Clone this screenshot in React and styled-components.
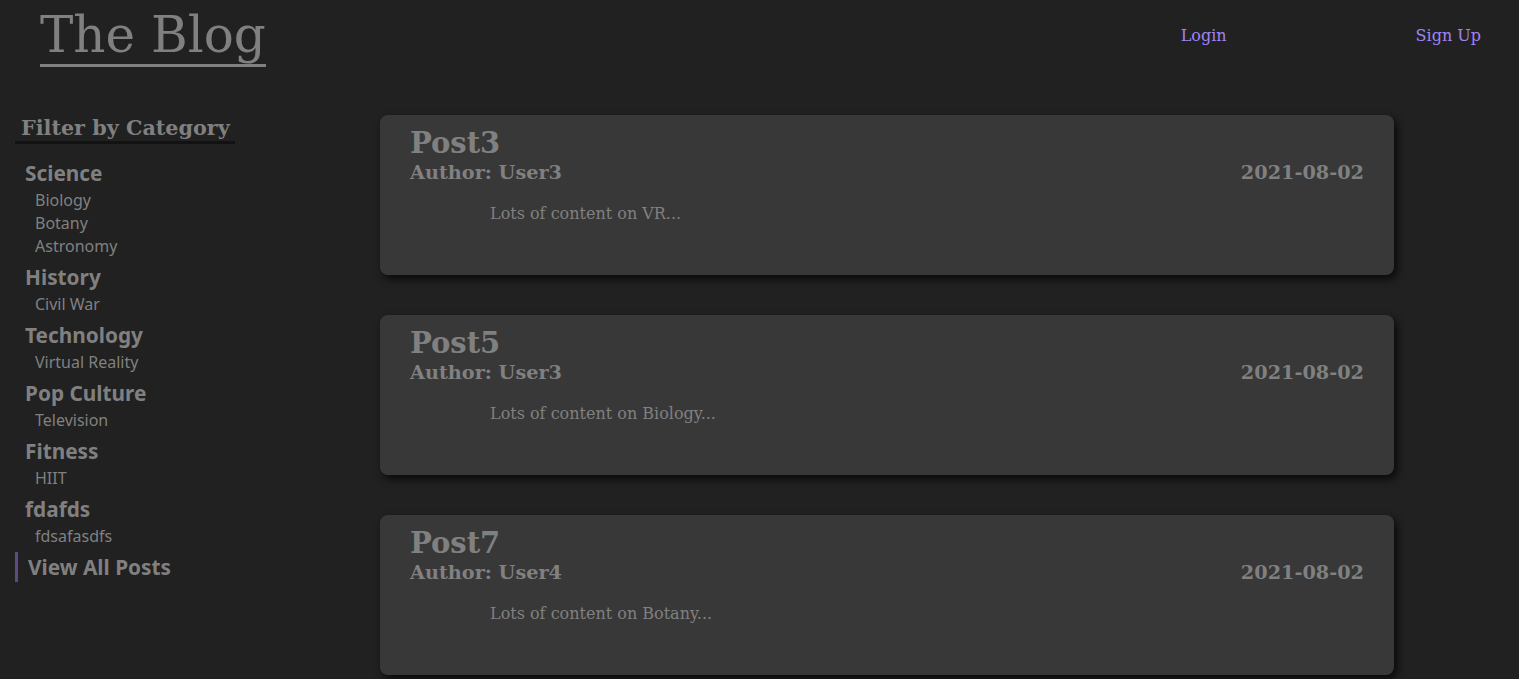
import React from "react";
import styled, { createGlobalStyle } from "styled-components";

const Global = createGlobalStyle`
  html, body { margin: 0; padding: 0; background: #212121; }
  body { font-family: "DejaVu Serif", serif; color: #808080; }
`;

const Page = styled.div`
  min-height: 679px;
  background: #212121;
`;

const Header = styled.header`
  display: flex;
  justify-content: space-between;
  align-items: flex-start;
  height: 115px;
  padding: 6px 38px 0 40px;
  box-sizing: border-box;
`;

const Title = styled.h1`
  margin: 0;
  font-family: "DejaVu Serif", serif;
  font-weight: normal;
  font-size: 50px;
  line-height: normal;
  color: #808080;
  border-bottom: 3px solid #808080;
`;

const Nav = styled.nav`
  display: flex;
  gap: 189px;
  padding-top: 19px;
`;

const NavLink = styled.a`
  font-family: "DejaVu Serif", serif;
  font-size: 16px;
  line-height: 22px;
  color: #a084f2;
  text-decoration: none;
`;

const Body = styled.div`
  display: flex;
  align-items: flex-start;
  padding-left: 15px;
`;

const Sidebar = styled.aside`
  width: 220px;
  flex-shrink: 0;
  display: flex;
  flex-direction: column;
`;

const FilterTitle = styled.h3`
  margin: 0 0 10px;
  padding-left: 6px;
  font-family: "DejaVu Serif", serif;
  font-weight: bold;
  font-size: 20.7px;
  line-height: 26px;
  color: #808080;
  border-bottom: 3px solid #121212;
`;

const Category = styled.div`
  display: flex;
  flex-direction: column;
`;

const CatName = styled.div`
  margin: 6px 0 2px;
  padding-left: 10px;
  font-family: "Noto Sans", sans-serif;
  font-weight: bold;
  font-size: 20.8px;
  line-height: 27px;
  color: #808080;
`;

const SubItem = styled.div`
  padding-left: 20px;
  font-family: "Noto Sans", sans-serif;
  font-size: 16px;
  line-height: 23px;
  color: #808080;
`;

const ViewAll = styled.div`
  margin-top: 4px;
  padding-left: 10px;
  border-left: 3px solid #5e4a82;
  font-family: "Noto Sans", sans-serif;
  font-weight: bold;
  font-size: 20.8px;
  line-height: 30px;
  color: #808080;
`;

const Main = styled.main`
  margin-left: 145px;
  width: 1014px;
  display: flex;
  flex-direction: column;
  gap: 40px;
`;

const Card = styled.article`
  height: 160px;
  box-sizing: border-box;
  padding: 11px 30px 0 30px;
  background: #383838;
  border-radius: 8px;
  box-shadow: 3px 4px 8px rgba(0, 0, 0, 0.75);
`;

const PostTitle = styled.h2`
  margin: 0;
  font-family: "DejaVu Serif", serif;
  font-weight: bold;
  font-size: 29px;
  line-height: 35px;
  color: #808080;
`;

const Meta = styled.div`
  display: flex;
  justify-content: space-between;
  margin-top: 1px;
`;

const MetaText = styled.h3`
  margin: 0;
  font-family: "DejaVu Serif", serif;
  font-weight: bold;
  font-size: 19.25px;
  line-height: 22px;
  color: #808080;
`;

const Content = styled.p`
  margin: 20px 0 0;
  padding-left: 80px;
  font-family: "DejaVu Serif", serif;
  font-size: 16px;
  line-height: 19px;
  color: #808080;
`;

const categories = [
  ["Science", ["Biology", "Botany", "Astronomy"]],
  ["History", ["Civil War"]],
  ["Technology", ["Virtual Reality"]],
  ["Pop Culture", ["Television"]],
  ["Fitness", ["HIIT"]],
  ["fdafds", ["fdsafasdfs"]],
];

const posts = [
  { title: "Post3", author: "User3", date: "2021-08-02", content: "Lots of content on VR..." },
  { title: "Post5", author: "User3", date: "2021-08-02", content: "Lots of content on Biology..." },
  { title: "Post7", author: "User4", date: "2021-08-02", content: "Lots of content on Botany..." },
];

export default function App() {
  return (
    <Page>
      <Global />
      <Header>
        <Title>The Blog</Title>
        <Nav>
          <NavLink href="#">Login</NavLink>
          <NavLink href="#">Sign Up</NavLink>
        </Nav>
      </Header>
      <Body>
        <Sidebar>
          <FilterTitle>Filter by Category</FilterTitle>
          {categories.map(([name, subs]) => (
            <Category key={name}>
              <CatName>{name}</CatName>
              {subs.map((s) => (
                <SubItem key={s}>{s}</SubItem>
              ))}
            </Category>
          ))}
          <ViewAll>View All Posts</ViewAll>
        </Sidebar>
        <Main>
          {posts.map((p) => (
            <Card key={p.title}>
              <PostTitle>{p.title}</PostTitle>
              <Meta>
                <MetaText>Author: {p.author}</MetaText>
                <MetaText>{p.date}</MetaText>
              </Meta>
              <Content>{p.content}</Content>
            </Card>
          ))}
        </Main>
      </Body>
    </Page>
  );
}
